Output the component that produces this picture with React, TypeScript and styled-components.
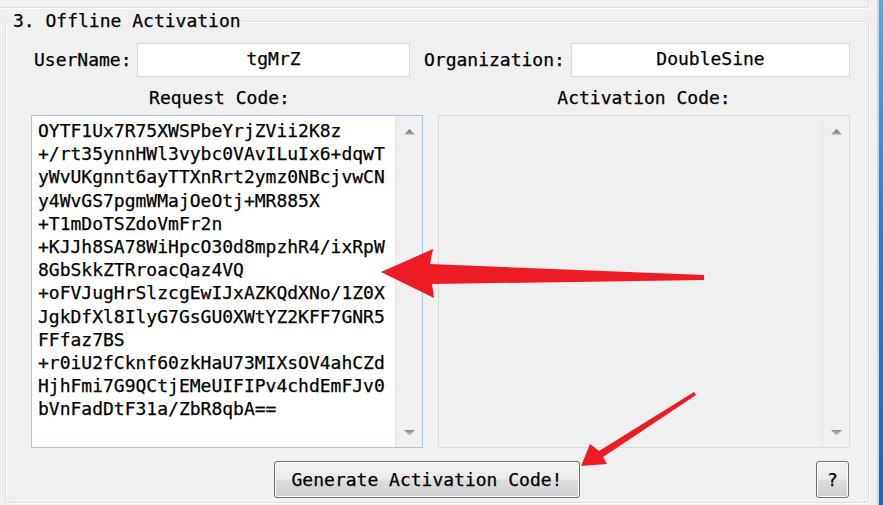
import React from 'react';
import styled, { createGlobalStyle } from 'styled-components';

const GlobalStyle = createGlobalStyle`
  html, body {
    margin: 0;
    padding: 0;
    background: #f0f0f0;
  }
  body {
    font-family: 'DejaVu Sans Mono', 'Liberation Mono', monospace;
    font-size: 18px;
    color: #000000;
    -webkit-text-stroke: 0.25px #000000;
  }
`;

const Page = styled.div`
  position: relative;
  display: flex;
  width: 883px;
  height: 505px;
  overflow: hidden;
  background: #f0f0f0;
`;

const Main = styled.div`
  display: flex;
  flex-direction: column;
  width: 877px;
`;

const WindowEdge = styled.div`
  width: 6px;
  height: 100%;
  border-left: 2px solid #c9d6e3;
  box-sizing: border-box;
  background: linear-gradient(180deg, #6f9fd4 0%, #3f7cc0 40%, #2a63a8 100%);
`;

const PrevGroup = styled.div`
  box-sizing: border-box;
  width: 869px;
  height: 8px;
  border-bottom: 1px solid #d5dfe5;
  border-right: 1px solid #d5dfe5;
  border-bottom-right-radius: 3px;
  box-shadow: 1px 1px 0 #ffffff;
`;

const GroupBox = styled.div`
  position: relative;
  box-sizing: border-box;
  display: flex;
  flex-direction: column;
  width: 864px;
  height: 482px;
  margin: 13px 0 0 5px;
  padding: 0 18px 4px 25px;
  border: 1px solid #d5dfe5;
  border-radius: 3px;
  box-shadow: inset 1px 1px 0 #ffffff, 1px 1px 0 #ffffff;
`;

const GroupTitle = styled.span`
  position: absolute;
  left: 6px;
  top: -12px;
  padding: 0 1px;
  line-height: 22px;
  background: #f0f0f0;
  white-space: pre;
`;

const FieldRow = styled.div`
  display: flex;
  align-items: center;
  height: 34px;
  margin-top: 21px;
  padding-left: 3px;
`;

const FieldLabel = styled.label<{ $width: number; $gap?: number }>`
  width: ${p => p.$width}px;
  margin-left: ${p => p.$gap || 0}px;
  line-height: 22px;
  white-space: pre;
`;

const TextField = styled.div<{ $width: number }>`
  box-sizing: border-box;
  width: ${p => p.$width}px;
  height: 34px;
  background: #ffffff;
  border: 1px solid #dadada;
  display: flex;
  align-items: center;
  justify-content: center;
  line-height: 22px;
  padding-bottom: 3px;
`;

const CaptionRow = styled.div`
  display: grid;
  grid-template-columns: 392px 412px;
  column-gap: 15px;
  margin-top: 10px;
  line-height: 22px;
`;

const Caption = styled.div<{ $shift?: number }>`
  text-align: center;
  padding-right: ${p => p.$shift || 0}px;
  white-space: pre;
`;

const CodeRow = styled.div`
  display: grid;
  grid-template-columns: 392px 412px;
  column-gap: 15px;
  margin-top: 6px;
  height: 333px;
`;

const CodeBox = styled.div<{ $readOnly?: boolean }>`
  box-sizing: border-box;
  display: flex;
  height: 333px;
  background: ${p => (p.$readOnly ? '#f0f0f0' : '#ffffff')};
  border: 1px solid ${p => (p.$readOnly ? '#dadada' : '#a9c7e3')};
  overflow: hidden;
`;

const CodeText = styled.div`
  flex: 1;
  padding: 3px 0 0 6px;
  line-height: 23.2px;
  white-space: pre;
`;

const ScrollTrack = styled.div`
  box-sizing: border-box;
  width: 27px;
  display: flex;
  flex-direction: column;
  align-items: center;
  justify-content: space-between;
  padding: 13px 0 11px;
  background: #f0f0f0;
  border-left: 1px solid #e6e6e6;
`;

const ButtonRow = styled.div`
  display: flex;
  align-items: center;
  margin-top: 13px;
  padding-left: 243px;
  padding-right: 1px;
`;

const PushButton = styled.button<{ $width: number }>`
  box-sizing: border-box;
  width: ${p => p.$width}px;
  height: 37px;
  padding: 0 0 1px;
  border: 1px solid #707070;
  border-radius: 3px;
  background: linear-gradient(180deg, #f2f2f2 0%, #ebebeb 48%, #dddddd 52%, #cfcfcf 100%);
  box-shadow: inset 0 0 0 1px #fbfbfb;
  font-family: 'DejaVu Sans Mono', 'Liberation Mono', monospace;
  font-size: 18px;
  color: #000000;
  -webkit-text-stroke: 0.25px #000000;
  cursor: pointer;
  white-space: pre;
`;

const Spacer = styled.div`
  flex: 1;
`;

const Annotations = styled.svg`
  position: absolute;
  left: 0;
  top: 0;
  pointer-events: none;
`;

const requestLines = [
  'OYTF1Ux7R75XWSPbeYrjZVii2K8z',
  '+/rt35ynnHWl3vybc0VAvILuIx6+dqwT',
  'yWvUKgnnt6ayTTXnRrt2ymz0NBcjvwCN',
  'y4WvGS7pgmWMajOeOtj+MR885X',
  '+T1mDoTSZdoVmFr2n',
  '+KJJh8SA78WiHpcO30d8mpzhR4/ixRpW',
  '8GbSkkZTRroacQaz4VQ',
  '+oFVJugHrSlzcgEwIJxAZKQdXNo/1Z0X',
  'JgkDfXl8IlyG7GsGU0XWtYZ2KFF7GNR5',
  'FFfaz7BS',
  '+r0iU2fCknf60zkHaU73MIXsOV4ahCZd',
  'HjhFmi7G9QCtjEMeUIFIPv4chdEmFJv0',
  'bVnFadDtF31a/ZbR8qbA==',
];

function ScrollArrow({ down }: { down?: boolean }) {
  return (
    <svg width="11" height="6" viewBox="0 0 11 6">
      <defs>
        <linearGradient id={down ? 'arrDown' : 'arrUp'} x1="0" y1="0" x2="0" y2="1">
          <stop offset="0" stopColor={down ? '#8a8a8a' : '#6e6e6e'} />
          <stop offset="1" stopColor={down ? '#c4c4c4' : '#a8a8a8'} />
        </linearGradient>
      </defs>
      <polygon
        points={down ? '0,0 11,0 5.5,5.5' : '5.5,0 11,5.5 0,5.5'}
        fill={`url(#${down ? 'arrDown' : 'arrUp'})`}
      />
    </svg>
  );
}

function Scrollbar() {
  return (
    <ScrollTrack>
      <ScrollArrow />
      <ScrollArrow down />
    </ScrollTrack>
  );
}

export default function App() {
  return (
    <>
      <GlobalStyle />
      <Page>
        <Main>
          <PrevGroup />
          <GroupBox>
            <GroupTitle>3. Offline Activation</GroupTitle>

            <FieldRow>
              <FieldLabel $width={103}>UserName:</FieldLabel>
              <TextField $width={273}>tgMrZ</TextField>
              <FieldLabel $width={147} $gap={14}>Organization:</FieldLabel>
              <TextField $width={279}>DoubleSine</TextField>
            </FieldRow>

            <CaptionRow>
              <Caption $shift={15}>Request Code:</Caption>
              <Caption $shift={-5}>Activation Code:</Caption>
            </CaptionRow>

            <CodeRow>
              <CodeBox>
                <CodeText>{requestLines.join('\n')}</CodeText>
                <Scrollbar />
              </CodeBox>
              <CodeBox $readOnly>
                <CodeText />
                <Scrollbar />
              </CodeBox>
            </CodeRow>

            <ButtonRow>
              <PushButton $width={306}>Generate Activation Code!</PushButton>
              <Spacer />
              <PushButton $width={33}>?</PushButton>
            </ButtonRow>
          </GroupBox>
        </Main>
        <WindowEdge />

        <Annotations width="883" height="505" viewBox="0 0 883 505">
          <polygon
            points="381,272 433,249 430,264 704,275 704,280 432,284 434,298"
            fill="#ed1c24"
          />
          <polygon
            points="581,466 590,444 599,451 694,392 696,395 603,457 607,464"
            fill="#ed1c24"
          />
        </Annotations>
      </Page>
    </>
  );
}
